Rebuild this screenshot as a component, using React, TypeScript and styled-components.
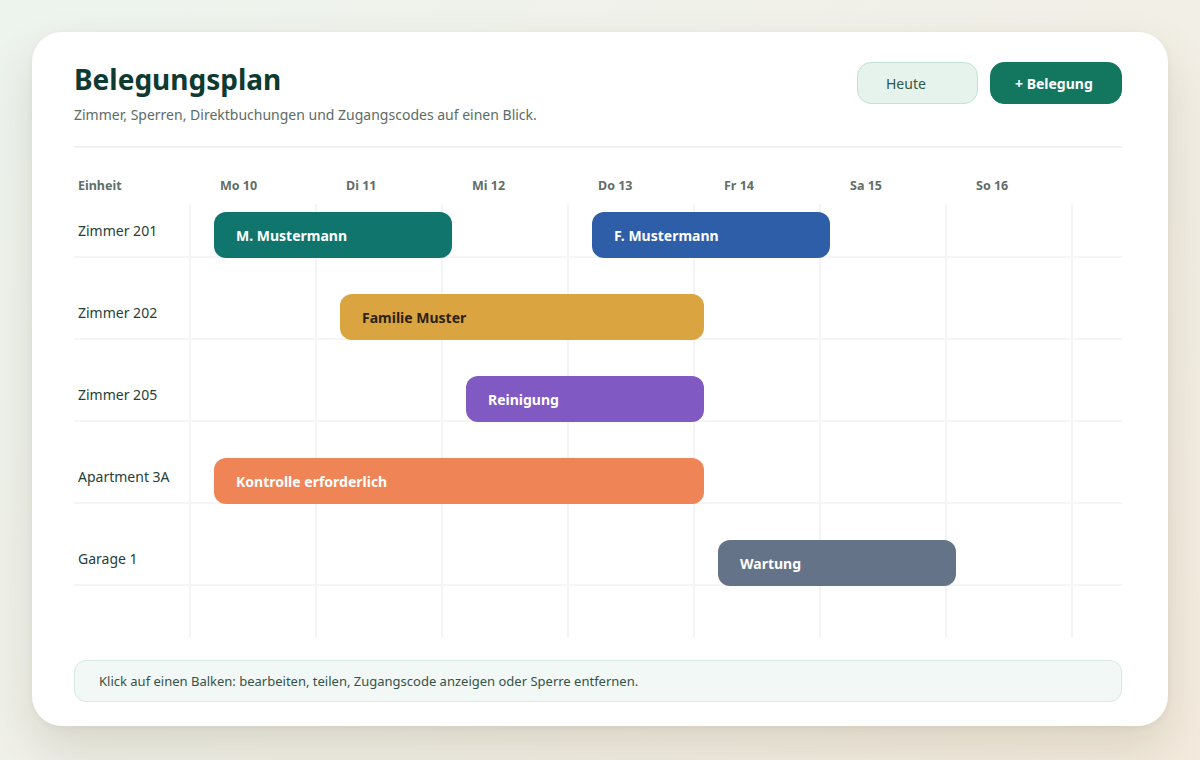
import React from 'react'
import styled, { createGlobalStyle } from 'styled-components'

const GlobalStyle = createGlobalStyle`
    html, body {
        margin: 0;
        padding: 0;
    }
    body {
        width: 1200px;
        height: 760px;
        overflow: hidden;
        font-family: "Noto Sans", "Open Sans", sans-serif;
        background: linear-gradient(135deg, #edf4ee 0%, #f1f0e8 50%, #f4ebde 100%);
    }
`

const Page = styled.div`
    padding: 32px;
`

const Card = styled.div`
    background: #ffffff;
    border-radius: 30px;
    padding: 30px 46px 24px 42px;
    box-shadow: 0 24px 48px rgba(96, 78, 44, 0.16), 0 2px 6px rgba(60, 70, 50, 0.06);
`

const Header = styled.header`
    display: flex;
    justify-content: space-between;
    align-items: flex-start;
    padding-bottom: 21px;
    border-bottom: 2px solid #edf2f0;
`

const Title = styled.h1`
    margin: 0;
    font-size: 28px;
    font-weight: 700;
    color: #0e3a31;
    line-height: 34px;
`

const Subtitle = styled.p`
    margin: 9px 0 0;
    font-size: 14px;
    color: #5d6b67;
    line-height: 20px;
`

const Actions = styled.div`
    display: flex;
    gap: 12px;
`

const Button = styled.button<{ primary?: boolean }>`
    height: 42px;
    padding: 0 ${({ primary }) => primary ? '24px' : '28px'};
    min-width: ${({ primary }) => primary ? '132px' : '121px'};
    text-align: left;
    border-radius: 14px;
    font-family: inherit;
    font-size: 14px;
    font-weight: ${({ primary }) => primary ? 700 : 400};
    color: ${({ primary }) => primary ? '#ffffff' : '#2c5a4c'};
    background: ${({ primary }) => primary ? '#13765f' : '#e6f3ec'};
    border: 1px solid ${({ primary }) => primary ? '#13765f' : '#c3e1d3'};
`

const cols = '140px repeat(7, 126px) 1fr'

const HeadRow = styled.div`
    display: grid;
    grid-template-columns: ${cols};
    margin-top: 28px;
    height: 18px;
    align-items: center;
`

const HeadCell = styled.div<{ first?: boolean }>`
    padding-left: ${({ first }) => first ? '4px' : '6px'};
    font-size: 12.5px;
    font-weight: 700;
    color: #5f6e69;
`

const Body = styled.div`
    margin-top: 10px;
    padding-bottom: 52px;
    background-image: linear-gradient(to right, #f3f5f4 2px, transparent 2px);
    background-size: 126px 100%;
    background-position: 115px 0;
`

const Row = styled.div<{ first?: boolean }>`
    display: grid;
    grid-template-columns: ${cols};
    align-items: center;
    padding-top: ${({ first }) => first ? '8px' : '36px'};
    border-bottom: 2px solid #f4f6f5;
`

const RowLabel = styled.div`
    grid-column: 1;
    grid-row: 1;
    padding: 0 0 8px 4px;
    font-size: 14px;
    color: #24403a;
`

const Bar = styled.div<{ bg: string; fg: string }>`
    grid-row: 1;
    height: 46px;
    margin-right: 14px;
    margin-bottom: -2px;
    border-radius: 12px;
    background: ${({ bg }) => bg};
    color: ${({ fg }) => fg};
    display: flex;
    align-items: center;
    padding-left: 22px;
    font-size: 14px;
    font-weight: 700;
    white-space: nowrap;
`

const Note = styled.div`
    margin-top: 22px;
    height: 42px;
    box-sizing: border-box;
    display: flex;
    align-items: center;
    padding: 0 24px;
    background: #f2f8f5;
    border: 1px solid #d8eae2;
    border-radius: 12px;
    font-size: 13px;
    color: #34524a;
`

const days = ['Mo 10', 'Di 11', 'Mi 12', 'Do 13', 'Fr 14', 'Sa 15', 'So 16']

type Booking = { label: string; from: number; to: number; bg: string; fg: string }

const rows: Array<{ unit: string; bookings: Booking[] }> = [
    {
        unit: 'Zimmer 201',
        bookings: [
            { label: 'M. Mustermann', from: 0, to: 1, bg: '#10766d', fg: '#ffffff' },
            { label: 'F. Mustermann', from: 3, to: 4, bg: '#2f5ea9', fg: '#ffffff' },
        ],
    },
    { unit: 'Zimmer 202', bookings: [{ label: 'Familie Muster', from: 1, to: 3, bg: '#daa441', fg: '#2b2210' }] },
    { unit: 'Zimmer 205', bookings: [{ label: 'Reinigung', from: 2, to: 3, bg: '#8159c3', fg: '#ffffff' }] },
    { unit: 'Apartment 3A', bookings: [{ label: 'Kontrolle erforderlich', from: 0, to: 3, bg: '#ef8456', fg: '#ffffff' }] },
    { unit: 'Garage 1', bookings: [{ label: 'Wartung', from: 4, to: 5, bg: '#657388', fg: '#ffffff' }] },
]

export default function App() {
    return (
        <Page>
            <GlobalStyle />
            <Card>
                <Header>
                    <div>
                        <Title>Belegungsplan</Title>
                        <Subtitle>Zimmer, Sperren, Direktbuchungen und Zugangscodes auf einen Blick.</Subtitle>
                    </div>
                    <Actions>
                        <Button>Heute</Button>
                        <Button primary>+ Belegung</Button>
                    </Actions>
                </Header>

                <HeadRow>
                    <HeadCell first>Einheit</HeadCell>
                    {days.map(d => <HeadCell key={d}>{d}</HeadCell>)}
                </HeadRow>

                <Body>
                    {rows.map((r, i) => (
                        <Row key={r.unit} first={i === 0}>
                            <RowLabel>{r.unit}</RowLabel>
                            {r.bookings.map(b => (
                                <Bar
                                    key={b.label}
                                    bg={b.bg}
                                    fg={b.fg}
                                    style={{ gridColumn: `${b.from + 2} / ${b.to + 3}` }}
                                >
                                    {b.label}
                                </Bar>
                            ))}
                        </Row>
                    ))}
                </Body>

                <Note>Klick auf einen Balken: bearbeiten, teilen, Zugangscode anzeigen oder Sperre entfernen.</Note>
            </Card>
        </Page>
    )
}
